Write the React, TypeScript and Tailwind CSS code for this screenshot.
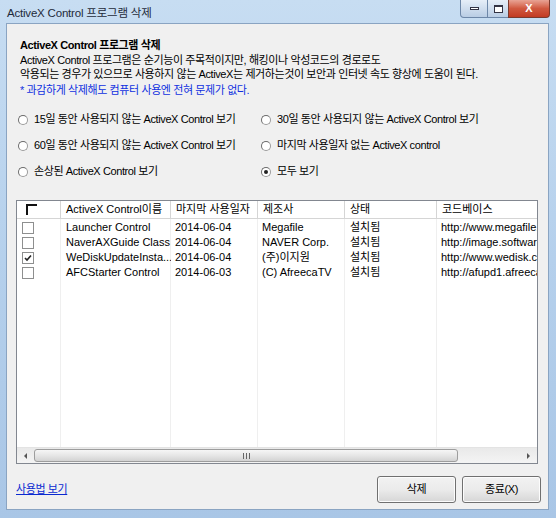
import { useState } from 'react';

const FONT = { fontFamily: '"Liberation Sans", "Noto Sans CJK KR", sans-serif' };

const FILTERS = [
  { id: 'd15', label: '15일 동안 사용되지 않는 ActiveX Control 보기' },
  { id: 'd30', label: '30일 동안 사용되지 않는 ActiveX Control 보기' },
  { id: 'd60', label: '60일 동안 사용되지 않는 ActiveX Control 보기' },
  { id: 'nolast', label: '마지막 사용일자 없는 ActiveX control' },
  { id: 'broken', label: '손상된 ActiveX Control 보기' },
  { id: 'all', label: '모두 보기' },
];

const ROWS = [
  { name: 'Launcher Control', date: '2014-06-04', maker: 'Megafile', state: '설치됨', code: 'http://www.megafile.co.kr', checked: false },
  { name: 'NaverAXGuide Class', date: '2014-06-04', maker: 'NAVER Corp.', state: '설치됨', code: 'http://image.software.naver.net', checked: false },
  { name: 'WeDiskUpdateInsta...', date: '2014-06-04', maker: '(주)이지원', state: '설치됨', code: 'http://www.wedisk.co.kr', checked: true },
  { name: 'AFCStarter Control', date: '2014-06-03', maker: '(C) AfreecaTV', state: '설치됨', code: 'http://afupd1.afreeca.com', checked: false },
];

// 컬럼 폭 (마지막 컬럼은 잘려서 보임)
const COLS = ['w-[44px]', 'w-[110px]', 'w-[87px]', 'w-[87px]', 'w-[92px]', 'w-[120px]'];
const HEADERS = ['', 'ActiveX Control이름', '마지막 사용일자', '제조사', '상태', '코드베이스'];

function Radio({ checked }: { checked: boolean }) {
  return (
    <span className="relative shrink-0 w-[10px] h-[10px] rounded-full border border-[#9a9a9a] border-t-[#6b6b6b] border-l-[#6b6b6b] bg-white flex items-center justify-center">
      {checked && <span className="w-[4px] h-[4px] rounded-full bg-[#222]" />}
    </span>
  );
}

function Check({ checked }: { checked: boolean }) {
  return (
    <span className="shrink-0 w-[12px] h-[12px] border border-[#8e8f8f] bg-white flex items-center justify-center">
      {checked && (
        <svg width="8" height="8" viewBox="0 0 8 8">
          <path d="M1 4 L3 6 L7 1.5" stroke="#222" strokeWidth="1.6" fill="none" />
        </svg>
      )}
    </span>
  );
}

export default function App() {
  const [filter, setFilter] = useState('all');
  const [rows, setRows] = useState(ROWS);

  return (
    <div
      className="w-[556px] h-[518px] flex flex-col bg-gradient-to-b from-[#c7ddf2] via-[#b5d0ec] to-[#a9c6e6] text-[#000]"
      style={FONT}
    >
      {/* 타이틀바 */}
      <div className="h-[23px] shrink-0 flex items-start">
        <span className="pl-[7px] pt-[5px] text-[11.5px] text-[#1e2a3a] tracking-[-0.2px]">ActiveX Control 프로그램 삭제</span>
        <div className="ml-auto mr-[6px] flex h-[18px]">
          <div className="w-[28px] border border-[#6d87a8] rounded-bl-[4px] border-t-0 bg-gradient-to-b from-[#e6eef8] to-[#b9cde4] flex items-center justify-center">
            <span className="w-[9px] h-[3px] border border-[#334] bg-white" />
          </div>
          <div className="w-[20px] border-b border-[#6d87a8] bg-gradient-to-b from-[#e6eef8] to-[#b9cde4] flex items-center justify-center">
            <span className="w-[9px] h-[8px] border border-[#334] border-t-2 bg-white" />
          </div>
          <div className="w-[42px] border border-t-0 border-[#7a3a2e] rounded-br-[4px] bg-gradient-to-b from-[#e8a394] via-[#d0583f] to-[#c23a22] flex items-center justify-center">
            <span className="text-white text-[11px] font-bold leading-none">X</span>
          </div>
        </div>
      </div>

      {/* 클라이언트 영역 */}
      <div className="flex-1 ml-[6px] mr-[7px] mb-[8px] border border-[#8aa4c2] bg-[#f0f0f0] flex flex-col">
        <div className="pl-[13px] pt-[14px] text-[11px] leading-[14.5px] tracking-[-0.4px]">
          <div className="font-bold">ActiveX Control 프로그램 삭제</div>
          <div>ActiveX Control 프로그램은 순기능이 주목적이지만, 해킹이나 악성코드의 경로로도</div>
          <div>악용되는 경우가 있으므로 사용하지 않는 ActiveX는 제거하는것이 보안과 인터넷 속도 향상에 도움이 된다.</div>
          <div className="text-[#1030e0] mt-[1px]">* 과감하게 삭제해도 컴퓨터 사용엔 전혀 문제가 없다.</div>
        </div>

        {/* 보기 옵션 */}
        <div className="grid grid-cols-[243px_1fr] gap-y-[11px] pl-[11px] mt-[15px] text-[11px] tracking-[-0.4px]">
          {FILTERS.map((f) => (
            <label key={f.id} className="flex items-center gap-[6px] h-[15px] cursor-default" onClick={() => setFilter(f.id)}>
              <Radio checked={filter === f.id} />
              <span>{f.label}</span>
            </label>
          ))}
        </div>

        {/* 목록 */}
        <div className="ml-[9px] mr-[10px] mt-[21px] h-[264px] border border-[#828790] bg-white flex flex-col overflow-hidden">
          <div className="flex h-[18px] shrink-0 border-b border-[#d5d5d5] text-[11px]">
            {HEADERS.map((h, i) => (
              <div key={i} className={`${COLS[i]} shrink-0 border-r border-[#d5d5d5] flex items-center pl-[5px] whitespace-nowrap`}>
                {i === 0 ? (
                  <span className="ml-[4px] w-[11px] h-[11px] border-t-2 border-l-2 border-[#111] bg-white" />
                ) : (
                  h
                )}
              </div>
            ))}
          </div>
          <div className="flex-1 relative">
            {/* 세로 구분선 */}
            <div className="absolute inset-0 flex pointer-events-none">
              {COLS.map((c, i) => (
                <div key={i} className={`${c} shrink-0 border-r border-[#efefef]`} />
              ))}
            </div>
            <div className="relative pt-[1px]">
              {rows.map((r, idx) => (
                <div key={r.name} className="flex h-[15px] text-[11px] items-center whitespace-nowrap">
                  <div
                    className={`${COLS[0]} shrink-0 pl-[5px] flex items-center`}
                    onClick={() => setRows(rows.map((x, j) => (j === idx ? { ...x, checked: !x.checked } : x)))}
                  >
                    <Check checked={r.checked} />
                  </div>
                  <div className={`${COLS[1]} shrink-0 pl-[5px] overflow-hidden`}>{r.name}</div>
                  <div className={`${COLS[2]} shrink-0 pl-[4px]`}>{r.date}</div>
                  <div className={`${COLS[3]} shrink-0 pl-[4px] overflow-hidden`}>{r.maker}</div>
                  <div className={`${COLS[4]} shrink-0 pl-[5px]`}>{r.state}</div>
                  <div className={`${COLS[5]} shrink-0 pl-[4px] overflow-hidden`}>{r.code}</div>
                </div>
              ))}
            </div>
          </div>
          {/* 가로 스크롤바 */}
          <div className="h-[16px] shrink-0 flex bg-gradient-to-b from-[#e9e9e9] to-[#f4f4f4] border-t border-[#e3e3e3]">
            <div className="w-[17px] flex items-center justify-center">
              <span className="w-0 h-0 border-y-[3px] border-y-transparent border-r-[3px] border-r-[#555]" />
            </div>
            <div className="w-[424px] my-[1px] rounded-[3px] border border-[#9d9d9d] bg-gradient-to-b from-[#f6f6f6] via-[#e6e6e6] to-[#d3d3d3] flex items-center justify-center">
              <span className="flex gap-[2px]">
                <span className="w-px h-[6px] bg-[#666]" />
                <span className="w-px h-[6px] bg-[#666]" />
                <span className="w-px h-[6px] bg-[#666]" />
              </span>
            </div>
            <div className="flex-1" />
            <div className="w-[17px] flex items-center justify-center">
              <span className="w-0 h-0 border-y-[3px] border-y-transparent border-l-[3px] border-l-[#555]" />
            </div>
          </div>
        </div>

        {/* 하단 */}
        <div className="flex items-center pl-[9px] pr-[7px] mt-[12px] text-[11px] tracking-[-0.4px]">
          <a className="text-[#0a2ad0] underline cursor-pointer">사용법 보기</a>
          <div className="ml-auto flex gap-[6px]">
            <button className="w-[79px] h-[27px] border border-[#707070] rounded-[3px] bg-gradient-to-b from-[#f2f2f2] via-[#ebebeb] to-[#d6d6d6] shadow-[inset_0_0_0_1px_#fcfcfc]">
              삭제
            </button>
            <button className="w-[79px] h-[27px] border border-[#707070] rounded-[3px] bg-gradient-to-b from-[#f2f2f2] via-[#ebebeb] to-[#d6d6d6] shadow-[inset_0_0_0_1px_#fcfcfc]">
              종료(X)
            </button>
          </div>
        </div>
      </div>
    </div>
  );
}
